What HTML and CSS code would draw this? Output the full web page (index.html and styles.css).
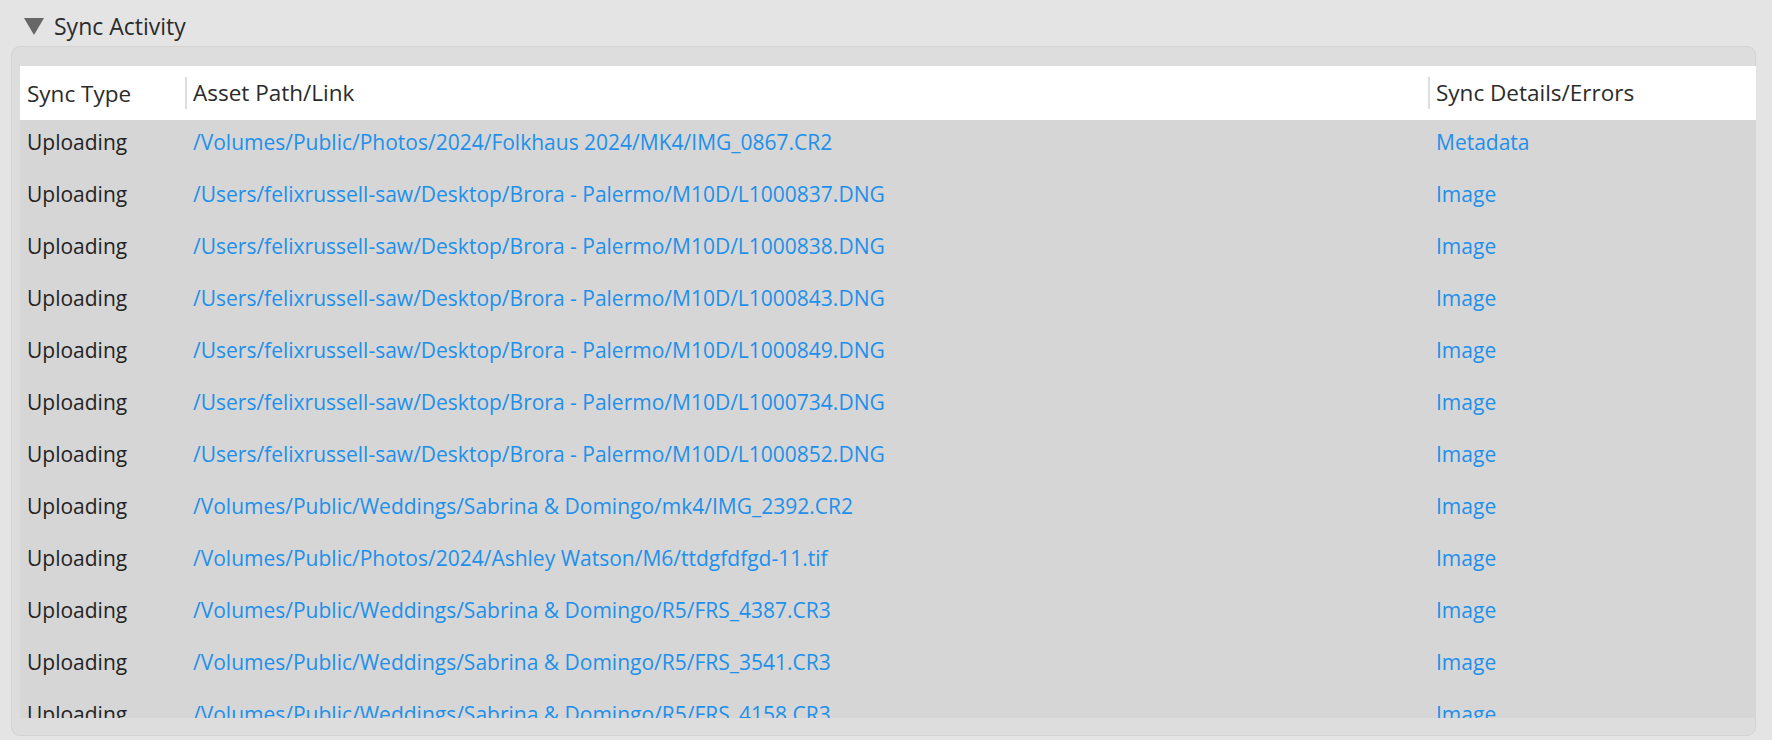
FILE: index.html
```html
<!DOCTYPE html>
<html lang="en">
<head>
    <meta charset="UTF-8">
    <title>Sync Activity</title>
    <link rel="stylesheet" href="styles.css">
</head>
<body>
    <div class="section-title">
        <span class="toggle"></span>
        <span>Sync Activity</span>
    </div>

    <div class="panel">
        <div class="table">
            <!-- Header -->
            <div class="row head">
                <div class="cell">Sync Type</div>
                <div class="cell divided">Asset Path/Link</div>
                <div class="cell divided">Sync Details/Errors</div>
            </div>

            <div class="row"><div class="cell">Uploading</div><div class="cell link">/Volumes/Public/Photos/2024/Folkhaus 2024/MK4/IMG_0867.CR2</div><div class="cell link">Metadata</div></div>
            <div class="row"><div class="cell">Uploading</div><div class="cell link">/Users/felixrussell-saw/Desktop/Brora - Palermo/M10D/L1000837.DNG</div><div class="cell link">Image</div></div>
            <div class="row"><div class="cell">Uploading</div><div class="cell link">/Users/felixrussell-saw/Desktop/Brora - Palermo/M10D/L1000838.DNG</div><div class="cell link">Image</div></div>
            <div class="row"><div class="cell">Uploading</div><div class="cell link">/Users/felixrussell-saw/Desktop/Brora - Palermo/M10D/L1000843.DNG</div><div class="cell link">Image</div></div>
            <div class="row"><div class="cell">Uploading</div><div class="cell link">/Users/felixrussell-saw/Desktop/Brora - Palermo/M10D/L1000849.DNG</div><div class="cell link">Image</div></div>
            <div class="row"><div class="cell">Uploading</div><div class="cell link">/Users/felixrussell-saw/Desktop/Brora - Palermo/M10D/L1000734.DNG</div><div class="cell link">Image</div></div>
            <div class="row"><div class="cell">Uploading</div><div class="cell link">/Users/felixrussell-saw/Desktop/Brora - Palermo/M10D/L1000852.DNG</div><div class="cell link">Image</div></div>
            <div class="row"><div class="cell">Uploading</div><div class="cell link">/Volumes/Public/Weddings/Sabrina &amp; Domingo/mk4/IMG_2392.CR2</div><div class="cell link">Image</div></div>
            <div class="row"><div class="cell">Uploading</div><div class="cell link">/Volumes/Public/Photos/2024/Ashley Watson/M6/ttdgfdfgd-11.tif</div><div class="cell link">Image</div></div>
            <div class="row"><div class="cell">Uploading</div><div class="cell link">/Volumes/Public/Weddings/Sabrina &amp; Domingo/R5/FRS_4387.CR3</div><div class="cell link">Image</div></div>
            <div class="row"><div class="cell">Uploading</div><div class="cell link">/Volumes/Public/Weddings/Sabrina &amp; Domingo/R5/FRS_3541.CR3</div><div class="cell link">Image</div></div>
            <div class="row"><div class="cell">Uploading</div><div class="cell link">/Volumes/Public/Weddings/Sabrina &amp; Domingo/R5/FRS_4158.CR3</div><div class="cell link">Image</div></div>
        </div>
    </div>
</body>
</html>
```

FILE: styles.css
```css
body {
    background-color: #e4e4e4;
    color: #232323;
    font-family: "Open Sans", Arial, sans-serif;
    font-size: 21px;
    margin: 0;
    height: 740px;
    overflow: hidden;
}
.section-title {
    display: flex;
    align-items: center;
    gap: 10px;
    height: 46px;
    padding: 6px 0 0 24px;
    box-sizing: border-box;
    font-size: 23px;
    color: #2b2b2b;
}
.toggle {
    width: 0;
    height: 0;
    border-left: 10px solid transparent;
    border-right: 10px solid transparent;
    border-top: 17px solid #676767;
}
.panel {
    margin-left: 11px;
    width: 1745px;
    height: 690px;
    box-sizing: border-box;
    background-color: #dddddd;
    border: 1px solid #d3d3d3;
    border-radius: 9px;
    padding: 19px 0 0 8px;
}
.table {
    height: 652px;
    overflow: hidden;
    margin-right: -1px;
}
.row {
    display: grid;
    grid-template-columns: 165px 1243px 1fr;
    height: 52px;
    box-sizing: border-box;
    padding-bottom: 9px;
    align-items: center;
    background-color: #d6d6d6;
}
.row.head {
    height: 54px;
    padding-bottom: 0;
    background-color: white;
    font-size: 22.5px;
    color: #2b2b2b;
}
.cell {
    padding-left: 7px;
    white-space: nowrap;
}
.divided {
    border-left: 2px solid #dedede;
    padding-left: 6px;
    line-height: 32px;
}
.link {
    color: #2190ec;
    padding-left: 8px;
}
```
